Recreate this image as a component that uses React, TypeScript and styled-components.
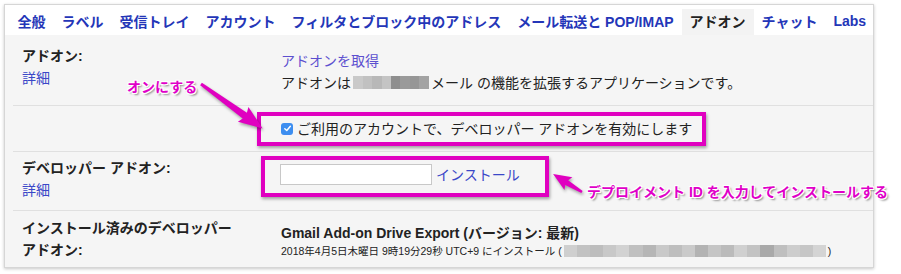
import styled, { createGlobalStyle } from "styled-components";

const GlobalStyle = createGlobalStyle`
  html, body {
    margin: 0;
    padding: 0;
    background: #fff;
  }
  body {
    font-family: "Liberation Sans", "Noto Sans CJK JP", sans-serif;
    color: #222;
  }
`;

const Page = styled.div`
  position: relative;
  width: 901px;
  height: 274px;
  padding: 4px;
  box-sizing: border-box;
`;

const Card = styled.div`
  width: 870px;
  height: 264px;
  border: 1px solid #d6d6d6;
  box-sizing: border-box;
  box-shadow: 0 1px 3px rgba(0, 0, 0, 0.22);
  background: #f5f5f5;
  display: flex;
  flex-direction: column;
`;

const TabBar = styled.div`
  display: flex;
  background: #fff;
  height: 30px;
  padding: 4px 0 0 4.5px;
  box-sizing: border-box;
`;

const Tab = styled.div<{ $active?: boolean }>`
  display: flex;
  align-items: center;
  padding: 1px 8px 2px;
  font-size: 14px;
  font-weight: 700;
  white-space: nowrap;
  color: ${(p) => (p.$active ? "#222" : "#2436b8")};
  background: ${(p) => (p.$active ? "#f3f3f3" : "transparent")};
`;

const Row = styled.div<{ $h: number; $last?: boolean }>`
  display: grid;
  grid-template-columns: 259px 1fr;
  height: ${(p) => p.$h}px;
  margin-left: 8px;
  padding-left: 9px;
  border-bottom: ${(p) => (p.$last ? "none" : "1px solid #e0e0e0")};
  box-sizing: border-box;
`;

const LabelCol = styled.div<{ $top: number }>`
  padding-top: ${(p) => p.$top}px;
  font-size: 14px;
  line-height: 22px;
`;

const Label = styled.div`
  font-weight: 700;
  color: #222;
`;

const Link = styled.a<{ $visited?: boolean }>`
  color: ${(p) => (p.$visited ? "#5c4fcf" : "#3a47c8")};
  text-decoration: none;
  cursor: pointer;
`;

const ValueCol = styled.div<{ $top: number }>`
  padding-top: ${(p) => p.$top}px;
  font-size: 14px;
  line-height: 22px;
`;

const Line = styled.div`
  display: flex;
  align-items: center;
  white-space: nowrap;
`;

const Blur = styled.span<{ $w: number; $h: number; $colors: string[] }>`
  display: inline-block;
  width: ${(p) => p.$w}px;
  height: ${(p) => p.$h}px;
  margin: 0 2px;
  background: linear-gradient(
    to right,
    ${(p) =>
      p.$colors
        .map((c, i, a) => `${c} ${(i / a.length) * 100}% ${((i + 1) / a.length) * 100}%`)
        .join(", ")}
  );
`;

const Highlight = styled.div<{ $shift: number }>`
  display: inline-flex;
  align-items: center;
  margin-left: -${(p) => p.$shift}px;
  border: 4px solid #e000c0;
  box-shadow: 1px 2px 3px rgba(0, 0, 0, 0.35);
  background: #f5f5f5;
`;

const CheckRow = styled(Highlight)`
  height: 34px;
  box-sizing: border-box;
  padding: 0 10px 0 20px;
  gap: 3px;
`;

const InstallRow = styled(Highlight)`
  height: 41px;
  box-sizing: border-box;
  padding: 0 25px 4px 15px;
  gap: 4px;
`;

const CheckBox = styled.span`
  display: inline-flex;
  align-items: center;
  justify-content: center;
  width: 12px;
  height: 12px;
  border-radius: 3px;
  background: #3d8ef0;
  margin-right: 1px;
`;

const TextInput = styled.input`
  width: 152px;
  height: 21px;
  box-sizing: border-box;
  border: 1px solid #c8c8c8;
  background: #fff;
  outline: none;
  margin: 0;
`;

const AddonName = styled.div`
  font-weight: 700;
  font-size: 14px;
  line-height: 20px;
`;

const Installed = styled.div`
  display: flex;
  align-items: center;
  font-size: 10.5px;
  line-height: 16px;
  white-space: nowrap;
`;

const Note = styled.div<{ $x: number; $y: number }>`
  position: absolute;
  left: ${(p) => p.$x}px;
  top: ${(p) => p.$y}px;
  font-size: 14px;
  font-weight: 700;
  line-height: 18px;
  white-space: nowrap;
  color: #e000c8;
  text-shadow: -1px -1px 0 #fff, 1px -1px 0 #fff, -1px 1px 0 #fff, 1px 1px 0 #fff,
    0 -1px 0 #fff, 0 1px 0 #fff, 2px 2px 2px rgba(0, 0, 0, 0.45);
`;

const ArrowSvg = styled.svg<{ $x: number; $y: number }>`
  position: absolute;
  left: ${(p) => p.$x}px;
  top: ${(p) => p.$y}px;
  overflow: visible;
  filter: drop-shadow(1px 2px 1.5px rgba(0, 0, 0, 0.35));
`;

const tabs = [
  "全般",
  "ラベル",
  "受信トレイ",
  "アカウント",
  "フィルタとブロック中のアドレス",
  "メール転送と POP/IMAP",
  "アドオン",
  "チャット",
  "Labs",
];

export default function App() {
  return (
    <>
      <GlobalStyle />
      <Page>
        <Card>
          <TabBar>
            {tabs.map((t) => (
              <Tab key={t} $active={t === "アドオン"}>
                {t}
              </Tab>
            ))}
          </TabBar>

          <Row $h={71}>
            <LabelCol $top={10}>
              <Label>アドオン:</Label>
              <Link>詳細</Link>
            </LabelCol>
            <ValueCol $top={15}>
              <Line>
                <Link $visited>アドオンを取得</Link>
              </Line>
              <Line>
                アドオンは
                <Blur
                  $w={76}
                  $h={13}
                  $colors={["#c9c9c9", "#c1c1c1", "#b8b8b8", "#c4c4c4", "#8e8e8e", "#9a9a9a", "#969696", "#a3a3a3"]}
                />
                メール の機能を拡張するアプリケーションです。
              </Line>
            </ValueCol>
          </Row>

          <Row $h={47}>
            <div />
            <ValueCol $top={6}>
              <CheckRow $shift={24}>
                <CheckBox>
                  <svg width="9" height="9" viewBox="0 0 10 10">
                    <path d="M2 5.2 L4.2 7.3 L8.2 2.6" fill="none" stroke="#fff" strokeWidth="1.6" strokeLinecap="round" strokeLinejoin="round" />
                  </svg>
                </CheckBox>
                ご利用のアカウントで、デベロッパー アドオンを有効にします
              </CheckRow>
            </ValueCol>
          </Row>

          <Row $h={59}>
            <LabelCol $top={5}>
              <Label>デベロッパー アドオン:</Label>
              <Link>詳細</Link>
            </LabelCol>
            <ValueCol $top={4}>
              <InstallRow $shift={20}>
                <TextInput type="text" />
                <Link>インストール</Link>
              </InstallRow>
            </ValueCol>
          </Row>

          <Row $h={56} $last>
            <LabelCol $top={6}>
              <Label>インストール済みのデベロッパー</Label>
              <Label>アドオン:</Label>
            </LabelCol>
            <ValueCol $top={12}>
              <AddonName>Gmail Add-on Drive Export (バージョン: 最新)</AddonName>
              <Installed>
                2018年4月5日木曜日 9時19分29秒 UTC+9 にインストール (
                <Blur
                  $w={262}
                  $h={12}
                  $colors={[
                    "#cfcfcf", "#c2c2c2", "#bdbdbd", "#c8c8c8", "#d2d2d2", "#c0c0c0", "#b6b6b6", "#c9c9c9",
                    "#bebebe", "#cacaca", "#b3b3b3", "#c5c5c5", "#bbbbbb", "#d0d0d0", "#c3c3c3", "#a9a9a9",
                    "#bfbfbf", "#cdcdcd", "#c6c6c6", "#d4d4d4",
                  ]}
                />
                )
              </Installed>
            </ValueCol>
          </Row>
        </Card>

        <Note $x={127} $y={78}>オンにする</Note>
        <ArrowSvg $x={201} $y={84} width="70" height="50">
          <g transform="rotate(35.8)">
            <polygon points="0,-1.5 54,-3.6 52,-9 76,0 52,9 54,3.6 0,1.5" fill="#e000c0" />
          </g>
        </ArrowSvg>

        <ArrowSvg $x={582} $y={192} width="1" height="1">
          <g transform="rotate(211.8)">
            <polygon points="0,-1.2 18,-2.8 16,-7.5 34,0 16,7.5 18,2.8 0,1.2" fill="#e000c0" />
          </g>
        </ArrowSvg>
        <Note $x={587} $y={183}>デプロイメント ID を入力してインストールする</Note>
      </Page>
    </>
  );
}
